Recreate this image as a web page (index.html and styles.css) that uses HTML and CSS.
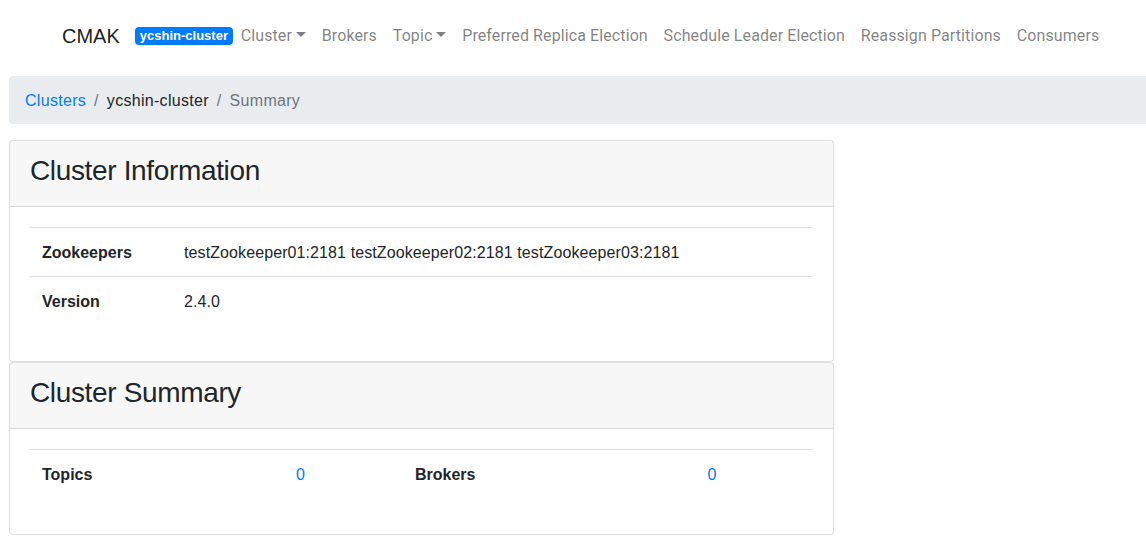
FILE: index.html
```html
<!DOCTYPE html>
<html>
<head>
<meta charset="utf-8">
<title>CMAK</title>
<link rel="stylesheet" href="styles.css">
</head>
<body>
<div class="page">
  <nav class="navbar">
    <a class="brand" href="#">CMAK</a>
    <span class="badge">ycshin-cluster</span>
    <ul class="nav">
      <li><a class="nav-link dropdown" href="#">Cluster</a></li>
      <li><a class="nav-link" href="#">Brokers</a></li>
      <li><a class="nav-link dropdown" href="#">Topic</a></li>
      <li><a class="nav-link" href="#">Preferred Replica Election</a></li>
      <li><a class="nav-link" href="#">Schedule Leader Election</a></li>
      <li><a class="nav-link" href="#">Reassign Partitions</a></li>
      <li><a class="nav-link" href="#">Consumers</a></li>
    </ul>
  </nav>
  <ol class="breadcrumb">
    <li class="crumb"><a href="#">Clusters</a></li>
    <li class="crumb sep">ycshin-cluster</li>
    <li class="crumb sep active">Summary</li>
  </ol>
  <div class="cards">
    <div class="card">
      <div class="card-header"><h3>Cluster Information</h3></div>
      <div class="card-body">
        <table class="table info">
          <tr><th class="key">Zookeepers</th><td>testZookeeper01:2181 testZookeeper02:2181 testZookeeper03:2181</td></tr>
          <tr><th class="key">Version</th><td>2.4.0</td></tr>
        </table>
      </div>
    </div>
    <div class="card">
      <div class="card-header"><h3>Cluster Summary</h3></div>
      <div class="card-body">
        <table class="table summary">
          <colgroup><col class="c1"><col class="c2"><col class="c3"><col class="c4"></colgroup>
          <tr><th>Topics</th><td class="num"><a href="#">0</a></td><th>Brokers</th><td class="num"><a href="#">0</a></td></tr>
        </table>
      </div>
    </div>
  </div>
</div>
</body>
</html>
```

FILE: styles.css
```css
html { overflow: hidden; }
body {
  margin: 0;
  font-family: "Liberation Sans", Arial, sans-serif;
  font-size: 16px;
  line-height: 1.5;
  color: #212529;
  background: #fff;
}
a { text-decoration: none; color: #007bff; }
.page { padding-left: 9px; }

.navbar {
  display: flex;
  align-items: center;
  height: 70px;
  padding: 2px 0 0 53px;
  box-sizing: border-box;
  white-space: nowrap;
}
.brand {
  font-size: 20px;
  color: rgba(0,0,0,.9);
  margin-right: 15px;
  line-height: 30px;
}
.badge {
  display: inline-block;
  background: #007bff;
  color: #fff;
  font-weight: 700;
  font-size: 13px;
  line-height: 1;
  padding: 2px 5px 3px;
  border-radius: 4px;
}
.nav {
  display: flex;
  list-style: none;
  margin: 0;
  padding: 0;
}
.nav-link {
  display: block;
  padding: 8px 8px 8px 7.8px;
  color: rgba(0,0,0,.5);
  font-family: Roboto, "Liberation Sans", sans-serif;
  letter-spacing: 0.1px;
}
.dropdown::after {
  content: "";
  display: inline-block;
  margin-left: 4px;
  vertical-align: 4px;
  border-top: 5px solid;
  border-left: 5px solid transparent;
  border-right: 5px solid transparent;
}

.breadcrumb {
  display: flex;
  list-style: none;
  margin: 6px 0 16px;
  padding: 13px 16px 11px;
  width: 1200px;
  background: #e9ecef;
  border-radius: 4px;
  letter-spacing: 0.3px;
}
.crumb.sep { padding-left: 8px; }
.crumb.sep::before {
  content: "/";
  color: #6c757d;
  padding-right: 8px;
}
.crumb.active { color: #6c757d; }

.cards { width: 825px; }
.card {
  border: 1px solid rgba(0,0,0,.125);
  border-radius: 4px;
  background: #fff;
}
.card-header {
  padding: 12px 20px;
  background: rgba(0,0,0,.03);
  border-bottom: 1px solid rgba(0,0,0,.125);
}
.card-header h3 {
  margin: 0;
  padding: 1px 0 7px;
  font-size: 28px;
  font-weight: 500;
  line-height: 33px;
  letter-spacing: -0.35px;
}
.card-body { padding: 20px; }
.table {
  width: 100%;
  border-collapse: collapse;
  margin-bottom: 16px;
}
.table th, .table td {
  padding: 13px 12px 11px;
  border-top: 1px solid #dee2e6;
  text-align: left;
  vertical-align: top;
}
.table td { letter-spacing: 0.1px; }
.table th { font-weight: 700; }
.info .key { width: 118px; }
.summary .c1 { width: 168px; }
.summary .c2 { width: 205px; }
.summary .c3 { width: 208px; }
.summary .c4 { width: 202px; }
.summary .num { text-align: center; }
```
